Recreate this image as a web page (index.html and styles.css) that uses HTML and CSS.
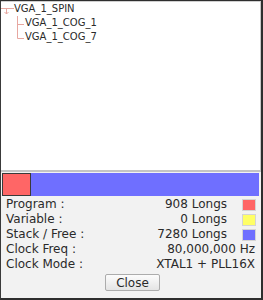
FILE: index.html
```html
<!DOCTYPE html>
<html lang="en">
<head>
<meta charset="UTF-8">
<title>Object Info</title>
<link rel="stylesheet" href="styles.css">
</head>
<body>
<div class="window">
    <div class="tree">
        <div class="node">
            <svg class="handle" width="13" height="14" viewBox="0 0 13 14">
                <path d="M0 6.5H13M5.5 6.5V12M3.5 10L5.5 12L7.5 10" stroke="#e7a7a0" fill="none"/>
            </svg>
            <span>VGA_1_SPIN</span>
        </div>
        <div class="node child">
            <svg class="elbow" width="11" height="14" viewBox="0 0 11 14">
                <path d="M3.5 0V14M3.5 8.5H10" stroke="#e7a7a0" fill="none"/>
            </svg>
            <span>VGA_1_COG_1</span>
        </div>
        <div class="node child">
            <svg class="elbow" width="11" height="14" viewBox="0 0 11 14">
                <path d="M3.5 0V8.5H10" stroke="#e7a7a0" fill="none"/>
            </svg>
            <span>VGA_1_COG_7</span>
        </div>
    </div>

    <div class="usage">
        <div class="used" style="width: 29px"></div>
    </div>

    <div class="info">
        <div class="row">
            <span class="label">Program :</span>
            <span class="value">908 Longs</span>
            <span class="swatch red"></span>
        </div>
        <div class="row">
            <span class="label">Variable :</span>
            <span class="value">0 Longs</span>
            <span class="swatch yellow"></span>
        </div>
        <div class="row">
            <span class="label">Stack / Free :</span>
            <span class="value">7280 Longs</span>
            <span class="swatch blue"></span>
        </div>
        <div class="row">
            <span class="label">Clock Freq :</span>
            <span class="value wide">80,000,000 Hz</span>
        </div>
        <div class="row">
            <span class="label">Clock Mode :</span>
            <span class="value wide">XTAL1 + PLL16X</span>
        </div>
        <div class="buttons">
            <button>Close</button>
        </div>
    </div>
</div>
</body>
</html>
```

FILE: styles.css
```css
/* Object info dialog */
body {
    margin: 0;
    padding: 0;
    font-family: "DejaVu Sans", sans-serif;
    color: #2a2a2a;
}
.window {
    width: 263px;
    height: 300px;
    box-sizing: border-box;
    border-top: 1px solid #2e2e2e;
    border-left: 1px solid #3a3a3a;
    border-right: 2px solid #2e2e2e;
    border-bottom: 2px solid #2e2e2e;
    background-color: #f2f2f2;
    display: flex;
    flex-direction: column;
}
.tree {
    height: 171px;
    box-sizing: border-box;
    background-color: #ffffff;
    border-top: 1px solid #cfcfcf;
    border-right: 1px solid #c8c8c8;
    border-bottom: 2px solid #c4c4c4;
    font-size: 10px;
}
.node {
    display: flex;
    align-items: center;
    height: 14px;
    line-height: 14px;
}
.node .handle {
    margin-right: 0;
    flex-shrink: 0;
}
.child {
    padding-left: 13px;
}
.elbow {
    flex-shrink: 0;
}
.usage {
    height: 23px;
    margin: 1px 2px 0 1px;
    background-color: #6f6fff;
    display: flex;
}
.used {
    box-sizing: border-box;
    border: 1px solid #3a3a3a;
    background-color: #ff6666;
}
.info {
    padding: 1px 5px 0 5px;
    font-size: 12px;
}
.row {
    display: flex;
    align-items: center;
    height: 15px;
    line-height: 15px;
}
.label {
    flex: 1;
}
.value {
    text-align: right;
}
.value.wide {
    margin-right: 1px;
}
.swatch {
    width: 14px;
    height: 12px;
    box-sizing: border-box;
    border: 1px solid #d4d4d4;
    margin-left: 15px;
}
.red {
    background-color: #ff6666;
}
.yellow {
    background-color: #ffff66;
}
.blue {
    background-color: #6f6fff;
}
.buttons {
    display: flex;
    justify-content: center;
    margin-top: 2px;
}
button {
    width: 55px;
    height: 17px;
    padding: 0;
    margin-left: 3px;
    font-family: "DejaVu Sans", sans-serif;
    font-size: 12px;
    color: #2a2a2a;
    background: linear-gradient(#fcfcfc, #e4e4e4);
    border: 1px solid #acacac;
    border-radius: 2px;
}
```
